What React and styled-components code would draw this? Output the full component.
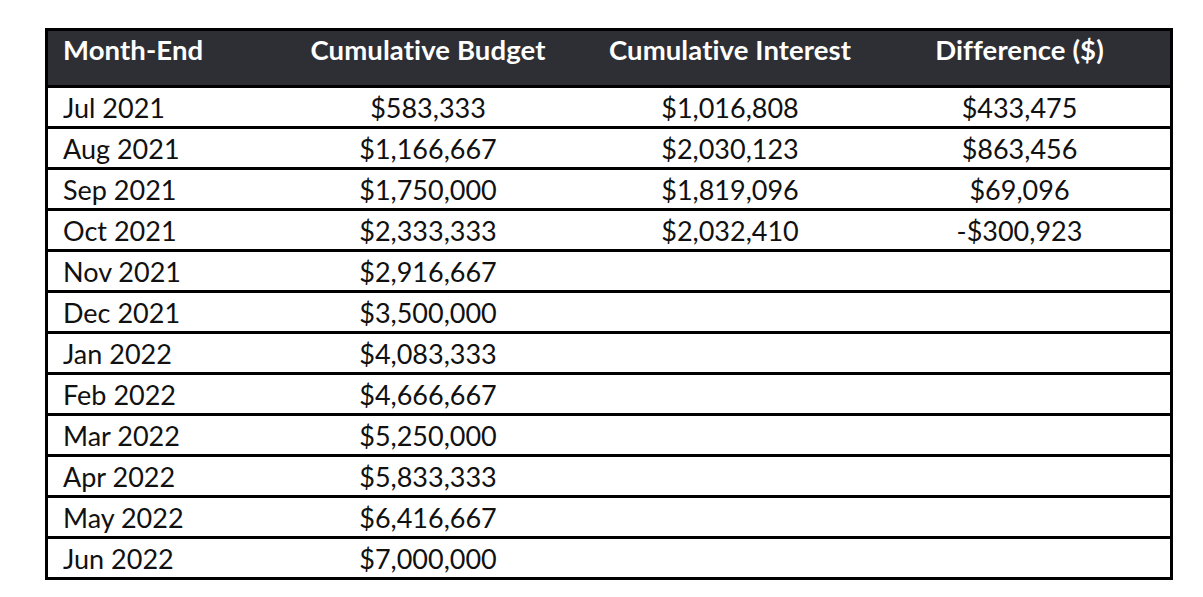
import React from "react";
import styled, { createGlobalStyle } from "styled-components";

const Global = createGlobalStyle`
  html, body { margin: 0; padding: 0; background: #fff; }
  body { font-family: Lato, "Open Sans", sans-serif; }
`;

const Page = styled.div`
  padding: 28px 0 0 45px;
`;

const Table = styled.div`
  width: 1128px;
  box-sizing: border-box;
  border: 3px solid #000;
  display: flex;
  flex-direction: column;
`;

const cols = "217px 326px 278px 301px";

const HeadRow = styled.div`
  display: grid;
  grid-template-columns: ${cols};
  height: 54px;
  background: #2e2f35;
  color: #fff;
  font-weight: 700;
  font-size: 27.5px;
  align-items: start;
  padding-top: 5px;
  box-sizing: border-box;
  letter-spacing: 0.1px;
`;

const Row = styled.div`
  display: grid;
  grid-template-columns: ${cols};
  height: 41px;
  box-sizing: border-box;
  border-top: 3px solid #000;
  align-items: center;
  font-size: 27px;
  color: #111;
`;

const Cell = styled.div`
  text-align: ${(p) => (p.$left ? "left" : "center")};
  padding-left: ${(p) => (p.$left ? "15px" : "0")};
  white-space: nowrap;
  line-height: 1;
`;

const data = [
  ["Jul 2021", "$583,333", "$1,016,808", "$433,475"],
  ["Aug 2021", "$1,166,667", "$2,030,123", "$863,456"],
  ["Sep 2021", "$1,750,000", "$1,819,096", "$69,096"],
  ["Oct 2021", "$2,333,333", "$2,032,410", "-$300,923"],
  ["Nov 2021", "$2,916,667", "", ""],
  ["Dec 2021", "$3,500,000", "", ""],
  ["Jan 2022", "$4,083,333", "", ""],
  ["Feb 2022", "$4,666,667", "", ""],
  ["Mar 2022", "$5,250,000", "", ""],
  ["Apr 2022", "$5,833,333", "", ""],
  ["May 2022", "$6,416,667", "", ""],
  ["Jun 2022", "$7,000,000", "", ""],
];

export default function App() {
  return (
    <>
      <Global />
      <Page>
        <Table>
          <HeadRow>
            <Cell $left>Month-End</Cell>
            <Cell>Cumulative Budget</Cell>
            <Cell>Cumulative Interest</Cell>
            <Cell>Difference ($)</Cell>
          </HeadRow>
          {data.map((r) => (
            <Row key={r[0]}>
              <Cell $left>{r[0]}</Cell>
              <Cell>{r[1]}</Cell>
              <Cell>{r[2]}</Cell>
              <Cell>{r[3]}</Cell>
            </Row>
          ))}
        </Table>
      </Page>
    </>
  );
}
